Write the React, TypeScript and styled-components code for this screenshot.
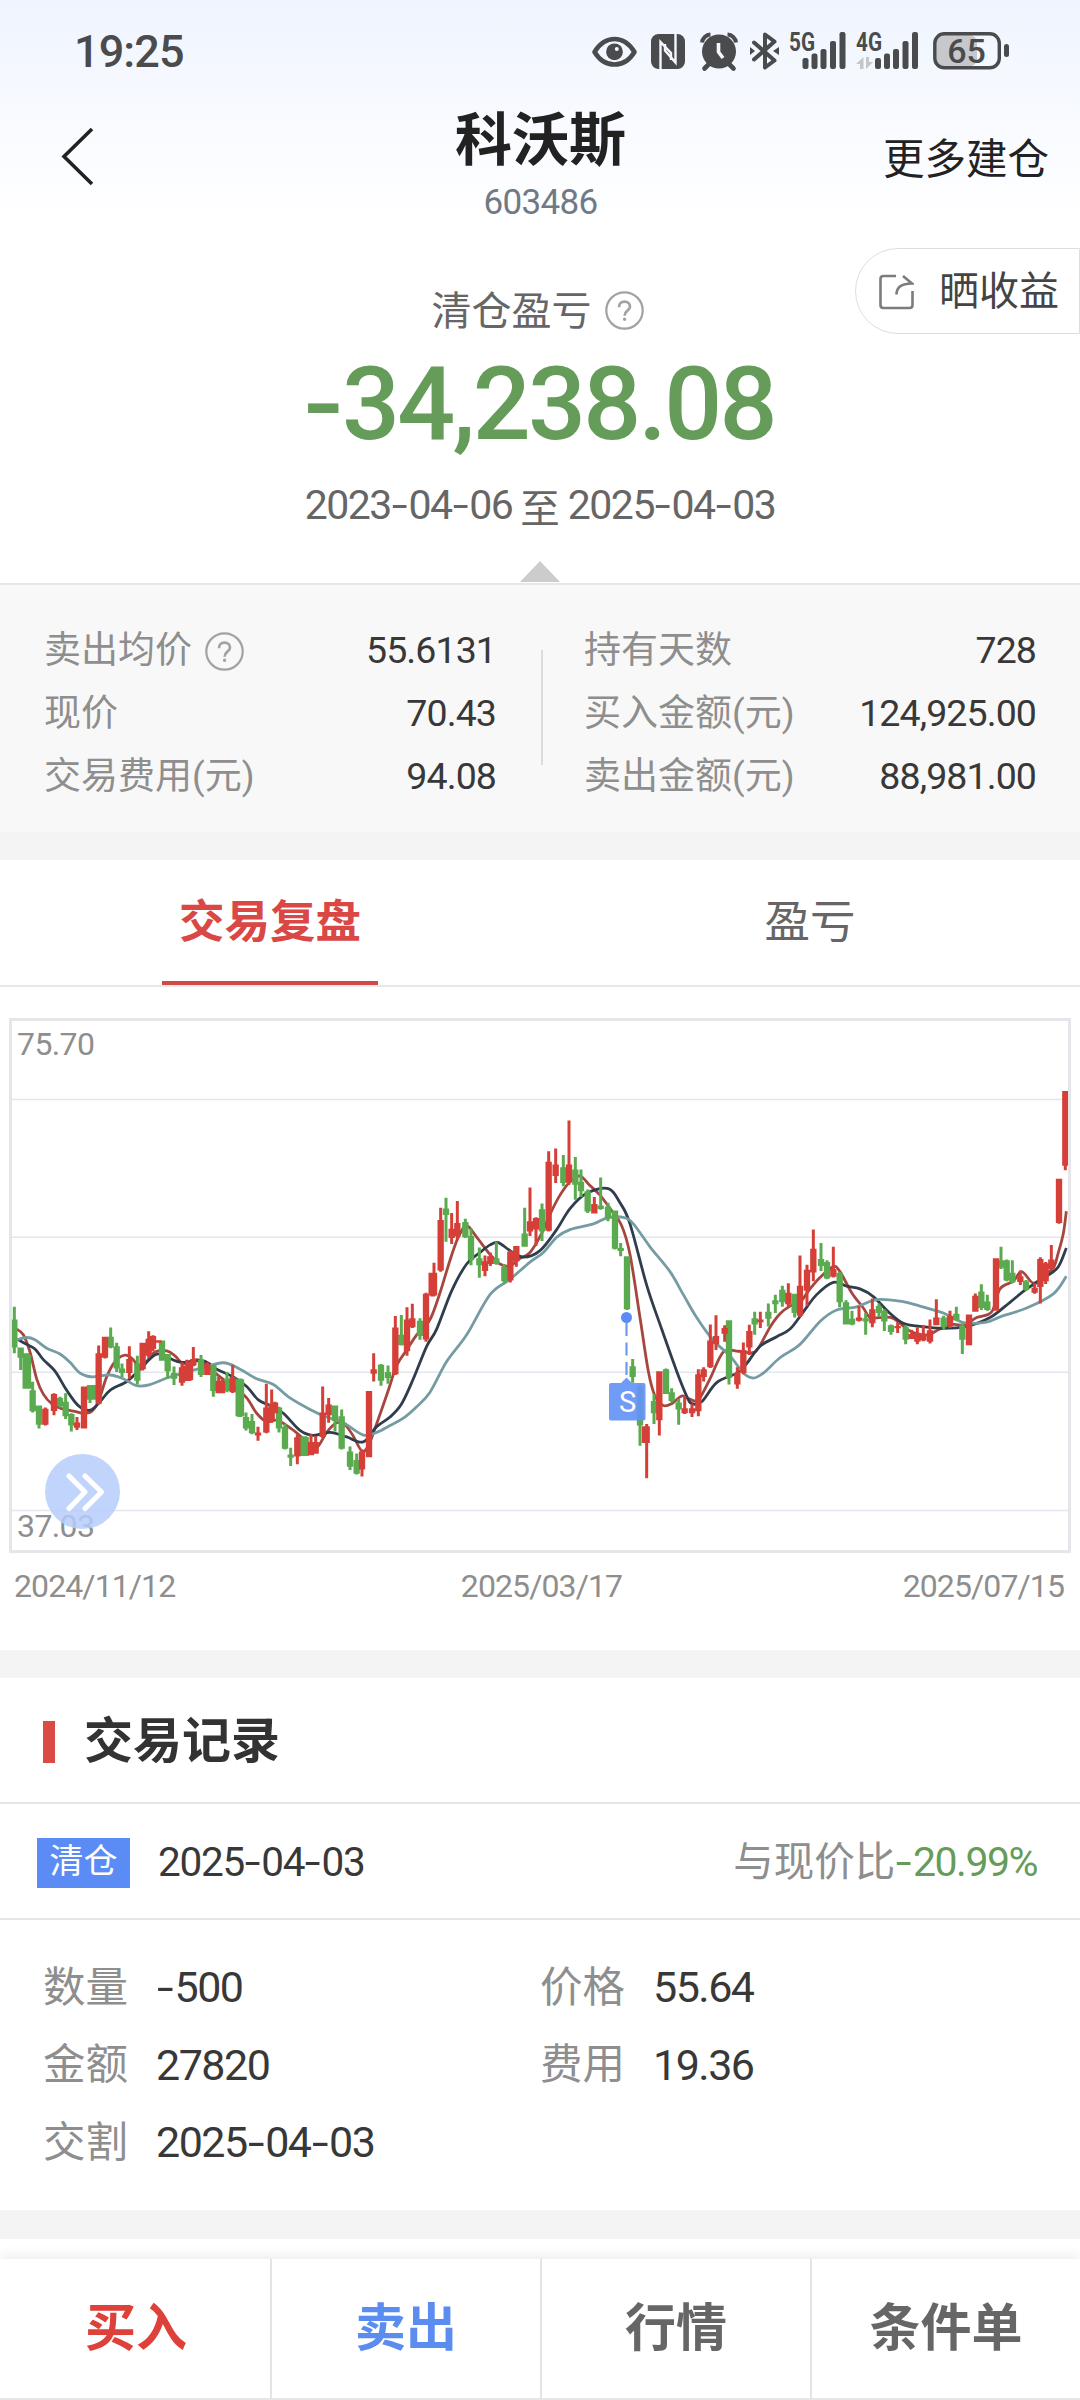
import React from "react";
import styled, { createGlobalStyle } from "styled-components";

const GlobalStyle = createGlobalStyle`
  * { box-sizing: border-box; }
  html, body { margin: 0; padding: 0; background: #fff; }
  body { font-family: Roboto, "Noto Sans CJK SC", sans-serif; color: #333; }
`;

const Page = styled.div`
  width: 1080px;
  height: 2400px;
  overflow: hidden;
  display: flex;
  flex-direction: column;
  background: #fff;
`;

/* ---------- numbers ---------- */

const NumText = styled.span<{ $size: number; $track?: number; $weight?: number; $color?: string }>`
  display: inline-block;
  white-space: nowrap;
  line-height: 1;
  font-size: ${(p) => p.$size}px;
  letter-spacing: ${(p) => p.$track ?? 0}px;
  font-weight: ${(p) => p.$weight ?? 400};
  color: ${(p) => p.$color ?? "#383838"};
`;

const Dash = styled.span<{ $heavy?: boolean }>`
  display: inline-block;
  width: ${(p) => (p.$heavy ? 0.36 : 0.43)}em;
  text-align: center;
  letter-spacing: 0;
  transform: scaleX(${(p) => (p.$heavy ? 1.15 : 1.4)});
`;

type NumProps = { children: string; size: number; track?: number; weight?: number; color?: string };

function Num({ children, size, track, weight, color }: NumProps) {
  return (
    <NumText $size={size} $track={track} $weight={weight} $color={color}>
      {children.split(/(-)/).map((part, i) =>
        part === "-" ? (
          <Dash key={i} $heavy={weight === 500}>
            -
          </Dash>
        ) : (
          part
        )
      )}
    </NumText>
  );
}

/* ---------- header ---------- */

const Top = styled.div`
  height: 230px;
  flex: none;
  background: linear-gradient(180deg, #eff4fe 0%, #f6f9ff 40%, #ffffff 96%);
`;

const StatusBar = styled.div`
  height: 102px;
  padding: 0 71px 0 74px;
  display: flex;
  align-items: center;
  justify-content: space-between;
`;

const StatusIcons = styled.div`
  display: flex;
  align-items: center;
  svg { display: block; overflow: visible; }
`;

const Gap = styled.i<{ $w: number }>`
  width: ${(p) => p.$w}px;
`;

const NavBar = styled.div`
  height: 128px;
  display: grid;
  grid-template-columns: 300px 1fr 300px;
  padding: 0 31px 0 60px;
`;

const BackCell = styled.div`
  padding-top: 25px;
  svg { display: block; }
`;

const TitleCell = styled.div`
  display: flex;
  flex-direction: column;
  align-items: center;
  padding: 7px 0 0 0;
  margin-left: -28px;
`;

const Title = styled.h1`
  margin: 0;
  font-size: 57px;
  line-height: 64px;
  font-weight: 700;
  color: #222;
`;

const Code = styled.div`
  margin-top: 12px;
`;

const MoreLink = styled.a`
  justify-self: end;
  padding-top: 28px;
  font-size: 41.5px;
  line-height: 60px;
  color: #222;
`;

/* ---------- summary ---------- */

const Summary = styled.section`
  position: relative;
  height: 355px;
  flex: none;
  display: flex;
  flex-direction: column;
  align-items: center;
  border-bottom: 2px solid #e6e6e6;
`;

const SharePill = styled.button`
  position: absolute;
  top: 18px;
  right: 0;
  width: 225px;
  height: 86px;
  padding: 1px 0 0 23px;
  display: flex;
  align-items: center;
  gap: 25px;
  background: #fff;
  border: 1px solid #dedede;
  border-radius: 43px 0 0 43px;
  font: 400 40px/1 Roboto, "Noto Sans CJK SC", sans-serif;
  color: #444;
`;

const SummaryLabel = styled.div`
  margin: 50px 0 0 -5px;
  height: 56px;
  display: flex;
  align-items: center;
  gap: 13px;
  font-size: 40px;
  color: #666;
  svg { margin-top: 5px; }
`;

const Amount = styled.div`
  margin-top: 17px;
  height: 102px;
`;

const Period = styled.div`
  margin-top: 22px;
  height: 56px;
  display: flex;
  align-items: center;
  gap: 8px;
  font-size: 39.5px;
  color: #666;
`;

const Caret = styled.i`
  margin-top: 28px;
  border: 20px solid transparent;
  border-top: 0;
  border-bottom: 21px solid #ccc;
`;

/* ---------- stats ---------- */

const Stats = styled.section`
  height: 247px;
  flex: none;
  background: #f8f8f8;
  padding: 32px 44px 0;
  display: grid;
  grid-template-columns: 452px 1px 452px;
  justify-content: space-between;
`;

const StatColumn = styled.dl`
  margin: 0;
`;

const StatRow = styled.div`
  height: 63px;
  display: flex;
  align-items: center;
  justify-content: space-between;
`;

const StatLabel = styled.dt`
  display: flex;
  align-items: center;
  gap: 13px;
  padding-top: 4px;
  font-size: 37px;
  line-height: 1;
  color: #8e8e8e;
  svg { margin-top: 2px; }
`;

const StatValue = styled.dd`
  margin: 5px 0 0;
`;

const Divider = styled.i`
  width: 2px;
  height: 115px;
  margin: 33px 0 0 1px;
  background: #dcdcdc;
`;

const Band = styled.div<{ $h: number }>`
  height: ${(p) => p.$h}px;
  flex: none;
  background: #f4f4f4;
`;

/* ---------- tabs ---------- */

const Tabs = styled.nav`
  height: 127px;
  flex: none;
  display: grid;
  grid-template-columns: 1fr 1fr;
  justify-items: center;
  border-bottom: 2px solid #e8e8e8;
`;

const Tab = styled.button<{ $active?: boolean }>`
  width: 216px;
  height: 125px;
  padding: 4px 0 0;
  border: 0;
  border-bottom: 4px solid ${(p) => (p.$active ? "#d04a47" : "transparent")};
  background: none;
  font: ${(p) => (p.$active ? 700 : 400)} 45.5px/1 Roboto, "Noto Sans CJK SC", sans-serif;
  color: ${(p) => (p.$active ? "#d94844" : "#666")};
  white-space: nowrap;
`;

/* ---------- chart ---------- */

const ChartSection = styled.section`
  height: 663px;
  flex: none;
  padding-top: 31px;
`;

const Plot = styled.div`
  position: relative;
  width: 1062px;
  height: 535px;
  margin-left: 9px;
  border: 3px solid #e6e6ea;
`;

const PlotSvg = styled.svg`
  display: block;
  width: 1056px;
  height: 529px;
`;

const PriceLabel = styled.div<{ $top: number }>`
  position: absolute;
  left: 5px;
  top: ${(p) => p.$top}px;
  line-height: 0;
`;

const SellPin = styled.svg`
  position: absolute;
  left: 596px;
  top: 289px;
  overflow: visible;
`;

const Expand = styled.button`
  position: absolute;
  left: 33px;
  top: 433px;
  width: 75px;
  height: 75px;
  padding: 0;
  border: 0;
  border-radius: 50%;
  background: rgba(181, 204, 250, 0.84);
  svg { display: block; }
`;

const DateAxis = styled.div`
  display: flex;
  justify-content: space-between;
  padding: 17px 16px 0 14px;
  > :nth-child(2) { margin-left: 5px; }
`;

/* ---------- trade record ---------- */

const RecordHead = styled.div`
  height: 126px;
  flex: none;
  display: flex;
  align-items: center;
  gap: 29px;
  padding: 0 43px;
  border-bottom: 2px solid #e6e6e6;
`;

const Accent = styled.i`
  width: 12px;
  height: 42px;
  margin-top: 3px;
  background: #dc4a45;
`;

const RecordTitle = styled.h2`
  margin: 2px 0 0;
  font-size: 49px;
  line-height: 1;
  font-weight: 700;
  color: #333;
`;

const RecordSummary = styled.div`
  height: 116px;
  flex: none;
  display: flex;
  align-items: center;
  padding: 3px 43px 0 37px;
  border-bottom: 2px solid #e6e6e6;
`;

const Tag = styled.span`
  width: 93px;
  height: 50px;
  margin-right: 28px;
  background: #5b8cf6;
  color: #fff;
  font-size: 34px;
  line-height: 46px;
  text-align: center;
`;

const Compare = styled.span`
  margin-left: auto;
  display: flex;
  align-items: center;
  font-size: 40.5px;
  line-height: 1;
  color: #8e8e8e;
`;

const Details = styled.div`
  height: 290px;
  flex: none;
  padding: 29px 44px 0 43px;
  display: grid;
  grid-template-columns: 497px 1fr;
  grid-auto-rows: 77.5px;
`;

const Detail = styled.div`
  display: flex;
  align-items: center;
  gap: 28px;
  font-size: 42.5px;
  line-height: 1;
  color: #8e8e8e;
`;

/* ---------- bottom bar ---------- */

const BottomBar = styled.nav`
  height: 141px;
  flex: none;
  margin-top: 20px;
  display: grid;
  grid-template-columns: repeat(4, 1fr);
  background: #fff;
  border-bottom: 2px solid #e6e6e6;
  box-shadow: 0 -2px 14px rgba(0, 0, 0, 0.09);
`;

const Action = styled.button<{ $color: string }>`
  border: 0;
  border-left: 2px solid #e4e4e4;
  padding: 0;
  background: none;
  font: 700 51px/1 Roboto, "Noto Sans CJK SC", sans-serif;
  color: ${(p) => p.$color};
  &:first-child { border-left-color: transparent; }
`;

/* ---------- icons ---------- */

const INK = "#4a4b4d";

const EyeIcon = () => (
  <svg width="45" height="38" viewBox="0 0 45 38" fill="none">
    <path d="M2.5 20C8 11 15 7 22.500 7S37 11 42.500 20C37 29 30 32.500 22.500 32.500S8 29 2.500 20Z" stroke={INK} strokeWidth="4.600" strokeLinejoin="round" />
    <circle cx="22.500" cy="19.800" r="8.400" fill={INK} />
    <circle cx="24.800" cy="17" r="2" fill="#f4f7ff" />
  </svg>
);

const NfcIcon = () => (
  <svg width="34" height="38" viewBox="0 0 34 38">
    <rect x="0" y="2" width="34" height="35" rx="7.500" fill={INK} />
    <path d="M9.500 38V10L20 21V28" fill="none" stroke="#f4f7ff" strokeWidth="2.400" />
    <path d="M24.500 1V30.500L14 18.500V12" fill="none" stroke="#f4f7ff" strokeWidth="2.400" />
  </svg>
);

const AlarmIcon = () => (
  <svg width="38" height="38" viewBox="0 0 38 38" fill="none">
    <circle cx="19" cy="19.500" r="17" fill={INK} />
    <path d="M2 10.500A9 9 0 0 1 10.500 2.500M36 10.500A9 9 0 0 0 27.500 2.500" stroke={INK} strokeWidth="4" />
    <path d="M9 32L4.500 36.500M29 32L33.500 36.500" stroke={INK} strokeWidth="4.600" strokeLinecap="round" />
    <path d="M18.500 11V20L23 26" stroke="#f4f7ff" strokeWidth="3.600" />
  </svg>
);

const BluetoothIcon = () => (
  <svg width="29" height="38" viewBox="0 0 29 38" fill="none">
    <path d="M4 10.500L24.500 28.500L15 35.500V2.500L24.500 9.500L4 27.500" stroke={INK} strokeWidth="4" strokeLinejoin="round" strokeLinecap="round" />
    <path d="M0 15L5 19L0 23ZM29 15L23 19L29 23Z" fill={INK} />
  </svg>
);

const SignalIcon = ({ label, data }: { label: string; data?: boolean }) => (
  <svg width="58" height="38" viewBox="0 0 58 38">
    <text x="0" y="18.500" fontFamily="Roboto, sans-serif" fontWeight="700" fontSize="25" textLength="26" lengthAdjust="spacingAndGlyphs" fill={INK}>
      {label}
    </text>
    {data && <path d="M0 32L7.500 25V37H4V32ZM10 25V37L17 30H13V25Z" fill="#c4c6ca" />}
    {[
      [13.5, 26],
      [22.5, 21.500],
      [31.5, 17],
      [41, 9],
      [50.5, 0],
    ].map(([x, y]) => (
      <rect key={x} x={data ? x + 5.5 : x} y={y} width="6" height={37 - y} rx="2.200" fill={INK} />
    ))}
  </svg>
);

const BatteryIcon = () => (
  <svg width="76" height="38" viewBox="0 0 76 38">
    <rect x="3" y="3" width="41" height="31.500" rx="8" fill="#c6c8cc" />
    <rect x="1.800" y="1.800" width="64.500" height="34" rx="9.500" fill="none" stroke={INK} strokeWidth="3.400" />
    <rect x="71" y="12" width="5" height="13" rx="2.500" fill={INK} />
    <text x="33.500" y="31" textAnchor="middle" fontFamily="Roboto, sans-serif" fontWeight="500" fontSize="34" fill={INK}>
      65
    </text>
  </svg>
);

const HelpIcon = () => (
  <svg width="39" height="39" viewBox="0 0 39 39" fill="none" stroke="#a2a2a2">
    <circle cx="19.500" cy="19.500" r="18.200" strokeWidth="2.200" />
    <path d="M14 16.200C14 12.600 16.400 10.700 19.500 10.700S25 12.700 25 15.700C25 19.300 19.600 19.700 19.600 24.700" strokeWidth="2.700" />
    <circle cx="19.600" cy="28.200" r="0.900" strokeWidth="1.600" />
  </svg>
);

const ShareIcon = () => (
  <svg width="35" height="36" viewBox="0 0 35 36" fill="none" stroke="#7c7c7c" strokeWidth="2.600">
    <path d="M17 2H4.500Q1.500 2 1.500 5V31Q1.500 34 4.500 34H30.500Q33.500 34 33.500 31V17" />
    <path d="M17.500 20.500C17.500 13.500 22 9.500 33 9.500L24 2" />
  </svg>
);

/* ---------- market data ---------- */

// x, high, low, open/close top, open/close bottom
type Bar = [number, number, number, number, number];

const RISING: Bar[] = [
  [136, 1065, 1112, 1068, 1110], [162, 1028, 1085, 1030, 1074], [231, 1090, 1124, 1104, 1118], [252, 1010, 1120, 1010, 1120],
  [296, 903, 1057, 923, 1055], [315, 880, 937, 880, 935], [388, 905, 990, 938, 975], [428, 896, 968, 896, 965],
  [446, 866, 935, 885, 930], [459, 876, 918, 878, 912], [475, 889, 896, 889, 896], [546, 947, 1008, 960, 1000],
  [560, 940, 996, 955, 996], [570, 945, 996, 945, 993], [580, 907, 957, 938, 955], [622, 947, 980, 952, 980],
  [656, 985, 1028, 996, 1028], [666, 992, 1028, 996, 1028], [698, 953, 1027, 985, 1025], [774, 1115, 1152, 1130, 1138],
  [799, 1003, 1132, 1065, 1130], [815, 1018, 1105, 1055, 1100], [825, 1050, 1080, 1052, 1080], [892, 1135, 1213, 1143, 1193],
  [933, 1135, 1190, 1155, 1190], [947, 1140, 1186, 1155, 1186], [968, 1010, 1145, 1078, 1142], [986, 1040, 1105, 1057, 1085],
  [1086, 1175, 1245, 1180, 1227], [1107, 1022, 1195, 1022, 1195], [1121, 923, 997, 965, 977], [1186, 826, 980, 856, 978],
  [1221, 803, 930, 835, 918], [1237, 794, 857, 832, 855], [1278, 765, 893, 768, 887], [1295, 713, 775, 713, 772],
  [1302, 687, 775, 713, 772], [1322, 543, 710, 575, 707], [1355, 557, 638, 598, 622], [1372, 525, 625, 583, 618],
  [1455, 668, 722, 683, 708], [1471, 660, 695, 670, 690], [1531, 655, 738, 657, 733], [1549, 643, 697, 643, 683],
  [1590, 490, 617, 578, 605], [1608, 568, 643, 570, 600], [1646, 395, 605, 423, 603], [1667, 388, 478, 430, 460],
  [1707, 315, 483, 430, 477], [1783, 515, 558, 533, 558], [1935, 1114, 1158, 1114, 1158], [1940, 1108, 1250, 1114, 1158],
  [1978, 970, 1138, 970, 1098], [2054, 1035, 1082, 1067, 1080], [2076, 1055, 1090, 1067, 1080], [2095, 965, 1088, 978, 1075],
  [2111, 960, 997, 965, 985], [2131, 848, 962, 890, 960], [2148, 824, 915, 878, 900], [2174, 850, 893, 857, 872],
  [2212, 960, 1016, 975, 1005], [2230, 895, 978, 915, 975], [2248, 849, 928, 865, 908], [2281, 815, 857, 835, 842],
  [2365, 740, 803, 765, 795], [2400, 668, 828, 747, 825], [2421, 692, 800, 705, 760], [2440, 600, 735, 650, 712],
  [2500, 645, 725, 703, 723], [2577, 800, 840, 830, 838], [2617, 780, 855, 808, 845], [2693, 842, 870, 852, 858],
  [2735, 862, 886, 873, 886], [2752, 855, 900, 870, 893], [2770, 850, 892, 873, 890], [2790, 835, 898, 863, 893],
  [2809, 782, 850, 830, 850], [2850, 812, 857, 825, 853], [2907, 822, 902, 822, 902], [2926, 767, 815, 773, 815],
  [2988, 675, 812, 675, 812], [3061, 707, 745, 722, 737], [3104, 740, 768, 752, 765], [3121, 672, 793, 677, 750],
  [3137, 685, 742, 688, 735], [3154, 640, 705, 678, 703], [3177, 467, 585, 467, 583], [3196, 238, 445, 238, 433],
];

const FALLING: Bar[] = [
  [43, 802, 923, 835, 908], [62, 908, 967, 908, 935], [77, 923, 1016, 923, 1016], [84, 923, 1016, 928, 1016],
  [98, 998, 1078, 1020, 1075], [117, 1060, 1120, 1060, 1110], [180, 1037, 1065, 1040, 1062], [197, 1028, 1095, 1050, 1088],
  [214, 1080, 1128, 1082, 1112], [270, 1006, 1053, 1006, 1045], [279, 1006, 1045, 1006, 1045], [332, 856, 910, 880, 908],
  [350, 896, 972, 905, 963], [366, 950, 985, 963, 975], [412, 930, 1005, 950, 995], [486, 890, 943, 890, 943],
  [503, 925, 990, 925, 970], [522, 958, 1006, 975, 990], [603, 928, 985, 940, 980], [640, 953, 1037, 953, 1022],
  [681, 972, 1025, 990, 1022], [716, 989, 1090, 989, 1088], [723, 989, 1090, 991, 1088], [738, 1078, 1125, 1090, 1120],
  [756, 1082, 1135, 1100, 1132], [837, 1063, 1130, 1065, 1120], [855, 1108, 1175, 1115, 1173], [872, 1170, 1218, 1188, 1196],
  [908, 1140, 1192, 1142, 1192], [917, 1140, 1192, 1142, 1192], [1005, 1060, 1128, 1060, 1100], [1025, 1070, 1175, 1088, 1173],
  [1050, 1167, 1228, 1180, 1220], [1070, 1185, 1240, 1202, 1238], [1143, 951, 1008, 953, 995], [1164, 955, 1003, 972, 988],
  [1204, 823, 903, 875, 902], [1260, 832, 888, 838, 878], [1338, 517, 632, 545, 562], [1396, 572, 622, 580, 620],
  [1413, 597, 693, 617, 680], [1438, 647, 726, 675, 693], [1489, 632, 692, 675, 690], [1513, 690, 740, 697, 735],
  [1574, 543, 645, 610, 645], [1626, 532, 630, 547, 605], [1690, 405, 487, 437, 478], [1726, 410, 522, 443, 483],
  [1743, 443, 515, 475, 500], [1763, 495, 557, 500, 553], [1802, 464, 548, 537, 546], [1824, 530, 578, 540, 570],
  [1845, 550, 652, 550, 650], [1862, 635, 670, 648, 656], [1881, 670, 810, 670, 808], [1898, 938, 1000, 957, 985],
  [1920, 1005, 1165, 1010, 1112], [1962, 1030, 1108, 1048, 1080], [1998, 963, 1030, 965, 1030], [2015, 1015, 1052, 1025, 1048],
  [2036, 1043, 1110, 1052, 1070], [2187, 837, 1005, 837, 988], [2264, 815, 875, 832, 848], [2305, 793, 853, 815, 833],
  [2326, 770, 818, 785, 795], [2347, 747, 802, 757, 790], [2384, 768, 830, 768, 818], [2463, 635, 708, 677, 695],
  [2481, 680, 730, 685, 728], [2519, 710, 803, 713, 790], [2538, 785, 848, 790, 848], [2556, 812, 850, 833, 848],
  [2597, 818, 875, 832, 840], [2637, 793, 828, 800, 818], [2653, 808, 865, 812, 840], [2673, 848, 875, 850, 868],
  [2717, 850, 900, 855, 888], [2831, 825, 862, 830, 855], [2869, 802, 838, 820, 837], [2887, 845, 925, 850, 888],
  [2944, 743, 810, 762, 805], [2962, 770, 812, 788, 810], [3003, 645, 703, 680, 700], [3020, 678, 735, 680, 733],
  [3037, 680, 740, 713, 738], [3078, 732, 760, 735, 758],
];

const MA5 = "50,860 70,875 90,920 110,990 130,1030 155,1055 185,1068 225,1075 250,1080 275,1075 295,1050 320,985 345,945 375,928 400,940 420,965 440,945 465,920 500,917 525,930 550,950 590,940 620,955 660,985 700,1010 740,1040 770,1080 800,1102 830,1098 865,1115 895,1135 920,1155 950,1170 980,1130 1010,1105 1035,1110 1060,1140 1085,1178 1105,1165 1135,1095 1165,1020 1190,955 1220,915 1250,875 1290,835 1320,765 1350,680 1375,620 1400,590 1430,620 1470,665 1500,690 1530,695 1560,675 1590,660 1625,610 1650,560 1680,510 1710,475 1740,460 1770,485 1800,510 1830,545 1865,590 1890,665 1920,830 1945,970 1965,1035 1990,1060 2015,1055 2045,1035 2070,1043 2095,1045 2130,990 2170,920 2215,918 2255,922 2275,910 2310,855 2340,820 2370,800 2400,790 2430,755 2460,725 2500,697 2520,710 2555,765 2590,805 2610,830 2640,830 2680,832 2730,865 2780,875 2820,860 2860,848 2890,850 2930,830 2975,815 3000,755 3040,735 3065,710 3100,740 3130,720 3160,700 3175,660 3190,610 3199,552";
const MA10 = "55,888 80,900 105,912 130,940 165,970 200,1020 235,1060 270,1072 300,1050 330,1020 380,997 420,965 450,938 475,925 510,937 545,947 610,943 650,965 700,985 740,1010 775,1045 810,1060 850,1080 900,1125 940,1138 990,1130 1040,1142 1090,1155 1130,1115 1170,1090 1205,1055 1240,990 1280,905 1310,860 1355,760 1400,690 1440,660 1470,640 1495,634 1530,655 1570,672 1620,655 1670,600 1710,545 1760,505 1825,493 1860,530 1890,585 1940,745 1985,860 2030,970 2060,1035 2075,1055 2105,1050 2150,1000 2210,975 2240,950 2280,905 2330,880 2370,860 2410,815 2450,770 2500,738 2540,748 2580,755 2620,775 2665,815 2710,845 2760,853 2830,858 2900,853 2970,830 3030,790 3080,755 3140,722 3175,697 3199,648";
const MA20 = "50,888 80,882 105,888 140,910 180,925 210,947 240,975 275,985 330,980 370,990 410,1008 450,1005 500,988 550,975 600,963 670,948 720,965 770,990 820,1005 870,1040 930,1070 980,1090 1030,1105 1090,1137 1130,1130 1170,1112 1210,1093 1250,1063 1290,1025 1340,945 1400,875 1470,770 1530,730 1590,685 1630,660 1670,620 1710,600 1780,585 1820,570 1870,568 1900,585 1950,645 2010,710 2050,770 2090,830 2140,890 2190,930 2230,975 2260,988 2290,975 2340,935 2400,900 2460,840 2510,810 2570,802 2630,783 2700,787 2760,800 2830,818 2890,843 2960,842 3000,828 3080,805 3160,768 3199,722";

function smooth(points: string) {
  const p = points.split(" ").map((s) => s.split(",").map(Number));
  let d = `M${p[0][0]} ${p[0][1]}`;
  for (let i = 0; i < p.length - 1; i++) {
    const a = p[Math.max(0, i - 1)];
    const b = p[i];
    const c = p[i + 1];
    const e = p[Math.min(p.length - 1, i + 2)];
    d += `C${b[0] + (c[0] - a[0]) / 6} ${b[1] + (c[1] - a[1]) / 6} ${c[0] - (e[0] - b[0]) / 6} ${c[1] - (e[1] - b[1]) / 6} ${c[0]} ${c[1]}`;
  }
  return d;
}

function barsPath(bars: Bar[]) {
  return bars
    .map(([x, hi, lo, top, bottom]) => `M${x - 4.5} ${hi}h9V${lo}h-9ZM${x - 9.5} ${top}h19V${bottom}h-19Z`)
    .join("");
}

function CandleChart() {
  return (
    <PlotSvg viewBox="36 54.900 3168 1382.500" preserveAspectRatio="none">
      {[260, 620, 973, 1334].map((y) => (
        <path key={y} d={`M36 ${y}H3204`} stroke="#e4e6ef" strokeWidth="1.400" vectorEffect="non-scaling-stroke" />
      ))}
      {[
        [MA5, "#a6473f"],
        [MA10, "#303d4c"],
        [MA20, "#769ca3"],
      ].map(([pts, color]) => (
        <path key={color} d={smooth(pts)} fill="none" stroke={color} strokeWidth="2.800" strokeLinejoin="round" vectorEffect="non-scaling-stroke" />
      ))}
      <path d={barsPath(FALLING)} fill="#5aaa50" fillRule="nonzero" />
      <path d={barsPath(RISING)} fill="#d53f37" fillRule="nonzero" />
    </PlotSvg>
  );
}

function SellMarker() {
  return (
    <SellPin width="40" height="112" viewBox="0 0 40 112">
      <circle cx="18.500" cy="7.500" r="5.500" fill="#5b8cf6" />
      <path d="M18.500 13V66" stroke="#6d9af5" strokeWidth="2.200" strokeDasharray="13 6.500" />
      <path d="M3 73H13L18.500 67.500L24 73H35.500Q37.500 73 37.500 75V108.500Q37.500 110.500 35.500 110.500H3Q1 110.500 1 108.500V75Q1 73 3 73Z" fill="#6593f5" fillOpacity="0.93" />
      <text x="19.500" y="102" textAnchor="middle" fontFamily="Roboto, sans-serif" fontSize="29" fill="#fff">
        S
      </text>
    </SellPin>
  );
}

/* ---------- screen ---------- */

const LEFT_STATS = [
  { label: "卖出均价", value: "55.6131", help: true },
  { label: "现价", value: "70.43" },
  { label: "交易费用(元)", value: "94.08" },
];

const RIGHT_STATS = [
  { label: "持有天数", value: "728" },
  { label: "买入金额(元)", value: "124,925.00" },
  { label: "卖出金额(元)", value: "88,981.00" },
];

const DETAILS = [
  ["数量", "-500"],
  ["价格", "55.64"],
  ["金额", "27820"],
  ["费用", "19.36"],
  ["交割", "2025-04-03"],
];

const ACTIONS = [
  ["买入", "#dd4139"],
  ["卖出", "#5b8cf0"],
  ["行情", "#666"],
  ["条件单", "#666"],
];

function StatList({ rows }: { rows: { label: string; value: string; help?: boolean }[] }) {
  return (
    <StatColumn>
      {rows.map((r) => (
        <StatRow key={r.label}>
          <StatLabel>
            {r.label}
            {r.help && <HelpIcon />}
          </StatLabel>
          <StatValue>
            <Num size={37.5} track={-0.9}>{r.value}</Num>
          </StatValue>
        </StatRow>
      ))}
    </StatColumn>
  );
}

export default function App() {
  return (
    <Page>
      <GlobalStyle />
      <Top>
        <StatusBar>
          <Num size={45} weight={500} track={-0.9} color={INK}>19:25</Num>
          <StatusIcons>
            <EyeIcon />
            <Gap $w={14} />
            <NfcIcon />
            <Gap $w={15} />
            <AlarmIcon />
            <Gap $w={12} />
            <BluetoothIcon />
            <Gap $w={10} />
            <SignalIcon label="5G" />
            <Gap $w={9} />
            <SignalIcon label="4G" data />
            <Gap $w={19} />
            <BatteryIcon />
          </StatusIcons>
        </StatusBar>
        <NavBar>
          <BackCell>
            <svg width="34" height="60" viewBox="0 0 34 60" fill="none">
              <path d="M32 2L4 29.500L32 57" stroke="#222" strokeWidth="3.600" />
            </svg>
          </BackCell>
          <TitleCell>
            <Title>科沃斯</Title>
            <Code>
              <Num size={35} track={-0.7} color="#6f7a86">603486</Num>
            </Code>
          </TitleCell>
          <MoreLink>更多建仓</MoreLink>
        </NavBar>
      </Top>

      <Summary>
        <SharePill>
          <ShareIcon />
          晒收益
        </SharePill>
        <SummaryLabel>
          清仓盈亏
          <HelpIcon />
        </SummaryLabel>
        <Amount>
          <Num size={102} weight={500} track={-2.7} color="#669c5a">-34,238.08</Num>
        </Amount>
        <Period>
          <Num size={41} track={-1.5} color="#666">2023-04-06</Num>
          至
          <Num size={41} track={-1.5} color="#666">2025-04-03</Num>
        </Period>
        <Caret />
      </Summary>

      <Stats>
        <StatList rows={LEFT_STATS} />
        <Divider />
        <StatList rows={RIGHT_STATS} />
      </Stats>
      <Band $h={28} />

      <Tabs>
        <Tab $active>交易复盘</Tab>
        <Tab>盈亏</Tab>
      </Tabs>

      <ChartSection>
        <Plot>
          <CandleChart />
          <PriceLabel $top={7}>
            <Num size={32} track={-0.6} color="#8e8e8e">75.70</Num>
          </PriceLabel>
          <PriceLabel $top={489}>
            <Num size={32} track={-0.6} color="#8e8e8e">37.03</Num>
          </PriceLabel>
          <SellMarker />
          <Expand>
            <svg width="75" height="75" viewBox="0 0 75 75" fill="none" stroke="#fff" strokeWidth="5.200" strokeLinecap="round" strokeLinejoin="round">
              <path d="M24 22L40 38L24 54.500M40 22L56.500 38L40 54.500" />
            </svg>
          </Expand>
        </Plot>
        <DateAxis>
          <Num size={32} track={-0.9} color="#8e8e8e">2024/11/12</Num>
          <Num size={32} track={-0.9} color="#8e8e8e">2025/03/17</Num>
          <Num size={32} track={-0.9} color="#8e8e8e">2025/07/15</Num>
        </DateAxis>
      </ChartSection>
      <Band $h={28} />

      <RecordHead>
        <Accent />
        <RecordTitle>交易记录</RecordTitle>
      </RecordHead>
      <RecordSummary>
        <Tag>清仓</Tag>
        <Num size={40.5} track={-1.3}>2025-04-03</Num>
        <Compare>
          与现价比
          <Num size={41} track={-1.5} color="#669c5a">-20.99%</Num>
        </Compare>
      </RecordSummary>
      <Details>
        {DETAILS.map(([label, value]) => (
          <Detail key={label}>
            {label}
            <Num size={43} track={-1.5}>{value}</Num>
          </Detail>
        ))}
      </Details>
      <Band $h={29} />

      <BottomBar>
        {ACTIONS.map(([label, color]) => (
          <Action key={label} $color={color}>{label}</Action>
        ))}
      </BottomBar>
    </Page>
  );
}
